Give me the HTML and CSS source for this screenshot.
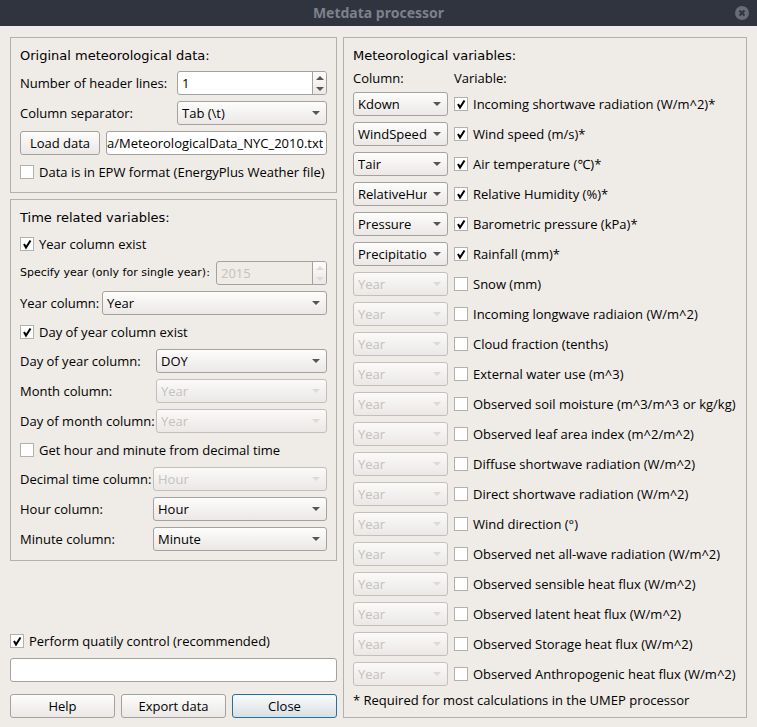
FILE: index.html
```html
<!DOCTYPE html>
<html lang="en">
<head>
<meta charset="utf-8">
<title>Metdata processor</title>
<link rel="stylesheet" href="styles.css">
</head>
<body>
<header class="titlebar">
  <h1>Metdata processor</h1>
  <button class="close" type="button" aria-label="Close window">
    <svg viewBox="0 0 14 14" width="14" height="14"><circle cx="7" cy="7" r="7" fill="#686c76"/><path d="M4.5 4.5l5 5M9.5 4.5l-5 5" stroke="#2f343f" stroke-width="2"/></svg>
  </button>
</header>
<main class="dialog">
  <div class="left">
    <section class="panel">
      <h2>Original meteorological data:</h2>
      <div class="row source">
        <label for="headers">Number of header lines:</label>
        <div class="spin">
          <input id="headers" type="number" value="1">
          <div class="steps">
            <button type="button" aria-label="More lines"><svg viewBox="0 0 8 4" width="8" height="4"><path d="M0 4L4 0L8 4z"/></svg></button>
            <button type="button" aria-label="Fewer lines"><svg viewBox="0 0 8 4" width="8" height="4"><path d="M0 0L4 4L8 0z"/></svg></button>
          </div>
        </div>
      </div>
      <div class="row source">
        <label for="separator">Column separator:</label>
        <select id="separator"><option>Tab (\t)</option></select>
      </div>
      <div class="row file">
        <button class="button" type="button">Load data</button>
        <input class="field path" type="text" aria-label="Data file" value="a/MeteorologicalData_NYC_2010.txt">
      </div>
      <label class="check"><input type="checkbox">Data is in EPW format (EnergyPlus Weather file)</label>
    </section>

    <section class="panel">
      <h2>Time related variables:</h2>
      <label class="check"><input type="checkbox" checked>Year column exist</label>
      <div class="row single">
        <label class="small" for="year">Specify year (only for single year):</label>
        <div class="spin off">
          <input id="year" type="number" value="2015" disabled>
          <div class="steps">
            <button type="button" aria-label="Next year" disabled><svg viewBox="0 0 8 4" width="8" height="4"><path d="M0 4L4 0L8 4z"/></svg></button>
            <button type="button" aria-label="Previous year" disabled><svg viewBox="0 0 8 4" width="8" height="4"><path d="M0 0L4 4L8 0z"/></svg></button>
          </div>
        </div>
      </div>
      <div class="row year">
        <label for="yearcol">Year column:</label>
        <select id="yearcol"><option>Year</option></select>
      </div>
      <label class="check"><input type="checkbox" checked>Day of year column exist</label>
      <div class="row day">
        <label for="doy">Day of year column:</label>
        <select id="doy"><option>DOY</option></select>
      </div>
      <div class="row day">
        <label for="month">Month column:</label>
        <select id="month" disabled><option>Year</option></select>
      </div>
      <div class="row day">
        <label for="dom">Day of month column:</label>
        <select id="dom" disabled><option>Year</option></select>
      </div>
      <label class="check"><input type="checkbox">Get hour and minute from decimal time</label>
      <div class="row hour">
        <label for="dectime">Decimal time column:</label>
        <select id="dectime" disabled><option>Hour</option></select>
      </div>
      <div class="row hour">
        <label for="hour">Hour column:</label>
        <select id="hour"><option>Hour</option></select>
      </div>
      <div class="row hour">
        <label for="minute">Minute column:</label>
        <select id="minute"><option>Minute</option></select>
      </div>
    </section>

    <div class="footer">
      <label class="check"><input type="checkbox" checked>Perform quatily control (recommended)</label>
      <input class="field" type="text" aria-label="Output">
      <div class="actions">
        <button class="button" type="button">Help</button>
        <button class="button" type="button">Export data</button>
        <button class="button default" type="button">Close</button>
      </div>
    </div>
  </div>

  <section class="panel">
    <h2>Meteorological variables:</h2>
    <div class="variable heads"><span>Column:</span><span>Variable:</span></div>
    <div class="variable"><select aria-label="Shortwave column"><option>Kdown</option></select><label class="check"><input type="checkbox" checked>Incoming shortwave radiation (W/m^2)*</label></div>
    <div class="variable"><select aria-label="Wind speed column"><option>WindSpeed</option></select><label class="check"><input type="checkbox" checked>Wind speed (m/s)*</label></div>
    <div class="variable"><select aria-label="Temperature column"><option>Tair</option></select><label class="check"><input type="checkbox" checked>Air temperature (℃)*</label></div>
    <div class="variable"><select aria-label="Humidity column"><option>RelativeHumidity</option></select><label class="check"><input type="checkbox" checked>Relative Humidity (%)*</label></div>
    <div class="variable"><select aria-label="Pressure column"><option>Pressure</option></select><label class="check"><input type="checkbox" checked>Barometric pressure (kPa)*</label></div>
    <div class="variable"><select aria-label="Rainfall column"><option>Precipitation</option></select><label class="check"><input type="checkbox" checked>Rainfall (mm)*</label></div>
    <div class="variable"><select aria-label="Snow column" disabled><option>Year</option></select><label class="check"><input type="checkbox">Snow (mm)</label></div>
    <div class="variable"><select aria-label="Longwave column" disabled><option>Year</option></select><label class="check"><input type="checkbox">Incoming longwave radiaion (W/m^2)</label></div>
    <div class="variable"><select aria-label="Cloud column" disabled><option>Year</option></select><label class="check"><input type="checkbox">Cloud fraction (tenths)</label></div>
    <div class="variable"><select aria-label="Water use column" disabled><option>Year</option></select><label class="check"><input type="checkbox">External water use (m^3)</label></div>
    <div class="variable"><select aria-label="Soil moisture column" disabled><option>Year</option></select><label class="check"><input type="checkbox">Observed soil moisture (m^3/m^3 or kg/kg)</label></div>
    <div class="variable"><select aria-label="Leaf area column" disabled><option>Year</option></select><label class="check"><input type="checkbox">Observed leaf area index (m^2/m^2)</label></div>
    <div class="variable"><select aria-label="Diffuse radiation column" disabled><option>Year</option></select><label class="check"><input type="checkbox">Diffuse shortwave radiation (W/m^2)</label></div>
    <div class="variable"><select aria-label="Direct radiation column" disabled><option>Year</option></select><label class="check"><input type="checkbox">Direct shortwave radiation (W/m^2)</label></div>
    <div class="variable"><select aria-label="Wind direction column" disabled><option>Year</option></select><label class="check"><input type="checkbox">Wind direction (°)</label></div>
    <div class="variable"><select aria-label="Net radiation column" disabled><option>Year</option></select><label class="check"><input type="checkbox">Observed net all-wave radiation (W/m^2)</label></div>
    <div class="variable"><select aria-label="Sensible heat column" disabled><option>Year</option></select><label class="check"><input type="checkbox">Observed sensible heat flux (W/m^2)</label></div>
    <div class="variable"><select aria-label="Latent heat column" disabled><option>Year</option></select><label class="check"><input type="checkbox">Observed latent heat flux (W/m^2)</label></div>
    <div class="variable"><select aria-label="Storage heat column" disabled><option>Year</option></select><label class="check"><input type="checkbox">Observed Storage heat flux (W/m^2)</label></div>
    <div class="variable"><select aria-label="Anthropogenic heat column" disabled><option>Year</option></select><label class="check"><input type="checkbox">Observed Anthropogenic heat flux (W/m^2)</label></div>
    <p class="note">* Required for most calculations in the UMEP processor</p>
  </section>
</main>
</body>
</html>
```
FILE: styles.css
```css
* { box-sizing: border-box; }
body {
  margin: 0;
  background: #efebe7;
  color: #000;
  font: 13px/16px "Open Sans", "Noto Sans", sans-serif;
}
h1, h2, p { margin: 0; }
input, select, button { font: inherit; color: inherit; margin: 0; min-width: 0; }

.titlebar {
  display: grid;
  grid-template-columns: 1fr auto 1fr;
  align-items: center;
  height: 26px;
  padding: 0 8px;
  background: #2f343f;
}
.titlebar h1 { grid-column: 2; font: bold 14px/24px "Noto Sans", sans-serif; color: #7c818c; }
.close { justify-self: end; display: flex; padding: 0; border: 0; background: none; }

.dialog {
  display: grid;
  grid-template-columns: minmax(0, 327fr) minmax(0, 404fr);
  gap: 6px;
  padding: 11px 10px 9px;
}
.left, .panel, .footer { display: flex; flex-direction: column; gap: 6px; }
.panel { padding: 9px; border: 1px solid #b4b0ac; }
h2 { font-size: 13px; font-weight: 400; line-height: 18px; font-family: "DejaVu Sans", sans-serif; }

.row { display: grid; gap: 6px; align-items: center; white-space: nowrap; }
.source { grid-template-columns: 151px 1fr; }
.single { grid-template-columns: 190px 1fr; }
.year { grid-template-columns: 76px 1fr; }
.day { grid-template-columns: 130px 1fr; }
.hour { grid-template-columns: 127px 1fr; }
.file { grid-template-columns: 80px 1fr; }
.small { font: 11px/16px "DejaVu Sans", sans-serif; }

select, .button, .field, .spin {
  height: 24px;
  width: 100%;
  border: 1px solid #a5a19e;
  border-radius: 3px;
}
select {
  appearance: none;
  padding: 0 20px 0 4px;
  background:
    url("data:image/svg+xml,%3Csvg xmlns='http://www.w3.org/2000/svg' width='8' height='4'%3E%3Cpath d='M0 0L4 4L8 0z' fill='%23555'/%3E%3C/svg%3E") right 6px center no-repeat,
    linear-gradient(#fdfdfc, #ebe8e6);
}
select:disabled {
  color: #c4c1be;
  opacity: 1;
  border-color: #c3bfbc;
  background:
    url("data:image/svg+xml,%3Csvg xmlns='http://www.w3.org/2000/svg' width='8' height='4'%3E%3Cpath d='M0 0L4 4L8 0z' fill='%23dcd9d6'/%3E%3C/svg%3E") right 6px center no-repeat,
    linear-gradient(#fbfaf9, #ebe8e6);
}
.button { padding: 0; background: linear-gradient(#fdfdfc, #ebe8e6); }
.default { border-color: #2a6f9c; background: linear-gradient(#fafbfb, #d8dfe4); }
.field { padding: 0 3px; background: #fff; }
.path { padding: 0 3px 0 0; text-align: right; }

.spin { display: flex; background: #fff; overflow: hidden; }
.spin input { flex: 1; padding: 0 4px; border: 0; background: none; appearance: textfield; }
.spin input::-webkit-inner-spin-button { appearance: none; margin: 0; }
.steps { display: flex; flex-direction: column; width: 14px; border-left: 1px solid #a5a19e; background: linear-gradient(#fdfdfc, #ebe8e6); }
.steps button { flex: 1; display: flex; align-items: center; justify-content: center; padding: 0; border: 0; background: none; }
.steps path { fill: #555; }
.off { background: #efebe7; color: #c4c1be; }
.off path { fill: #dcd9d6; }

.check { display: flex; align-items: center; gap: 5px; height: 22px; white-space: nowrap; }
.check input { appearance: none; flex: none; width: 14px; height: 14px; border: 1px solid #b4b0ac; background: #fff; }
.check input:checked {
  background: #fff url("data:image/svg+xml,%3Csvg xmlns='http://www.w3.org/2000/svg' width='12' height='12'%3E%3Cpath d='M3 6L5 9.5L9.5 2.5' fill='none' stroke='%23000' stroke-width='2'/%3E%3C/svg%3E") center no-repeat;
}

.footer { margin-top: auto; }
.actions { display: grid; grid-template-columns: repeat(3, 1fr); gap: 6px; padding-top: 6px; }

.variable { display: grid; grid-template-columns: 95px 1fr; gap: 6px; align-items: center; }
.heads { line-height: 15px; }
```
